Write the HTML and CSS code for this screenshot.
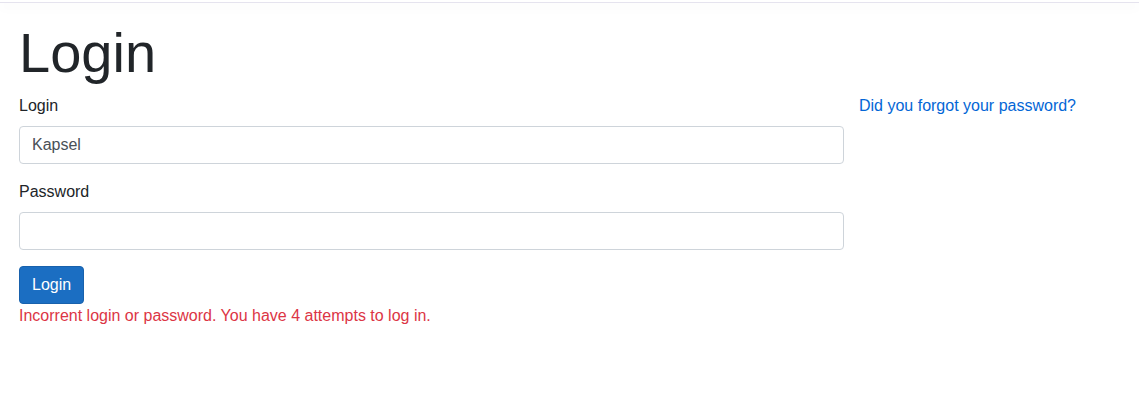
FILE: index.html
```html
<!DOCTYPE html>
<html lang="en">
<head>
    <meta charset="UTF-8">
    <meta name="viewport" content="width=device-width, initial-scale=1.0">
    <title>Login</title>
    <link rel="stylesheet" href="styles.css">
</head>
<body>

<header class="topbar"></header>

<main class="page">
    <h1 class="title">Login</h1>

    <div class="row">
        <form class="login-form" id="loginForm">
            <div class="form-group">
                <label for="login">Login</label>
                <input type="text" id="login" name="login" value="Kapsel">
            </div>

            <div class="form-group">
                <label for="password">Password</label>
                <input type="password" id="password" name="password">
            </div>

            <button type="submit" class="btn-primary">Login</button>
            <div class="text-danger">Incorrent login or password. You have 4 attempts to log in.</div>
        </form>

        <div class="side">
            <a href="#">Did you forgot your password?</a>
        </div>
    </div>
</main>

</body>
</html>
```

FILE: styles.css
```css
html {
    font-size: 16px;
}
body {
    margin: 0;
    font-family: "Liberation Sans", Arial, sans-serif;
    font-size: 1rem;
    line-height: 1.5;
    color: #212529;
    background: #fff;
}
.topbar {
    height: 2px;
    border-bottom: 1px solid #e5e3ee;
    box-shadow: 0 .25rem .75rem rgba(0, 0, 0, .05);
}
.page {
    padding: 0 19px;
}
.title {
    margin: 16px 0 8px;
    font-size: 3.5rem;
    font-weight: 400;
    line-height: 1.2;
}
.row {
    display: flex;
}
.login-form {
    width: 825px;
}
.side {
    margin-left: 15px;
}
.side a {
    color: #0366d6;
    text-decoration: none;
}
.form-group {
    margin-bottom: 16px;
}
.form-group label {
    display: block;
    margin-bottom: 8px;
}
.form-group input {
    display: block;
    box-sizing: border-box;
    width: 100%;
    height: 38px;
    padding: 6px 12px;
    font-family: inherit;
    font-size: 1rem;
    line-height: 1.5;
    color: #495057;
    border: 1px solid #ced4da;
    border-radius: 4px;
    outline: none;
}
.btn-primary {
    display: block;
    height: 38px;
    padding: 6px 12px;
    font-family: inherit;
    font-size: 1rem;
    line-height: 1.5;
    color: #fff;
    background-color: #1b6ec2;
    border: 1px solid #1861ac;
    border-radius: 4px;
    cursor: pointer;
}
.text-danger {
    color: #dc3545;
}
```
